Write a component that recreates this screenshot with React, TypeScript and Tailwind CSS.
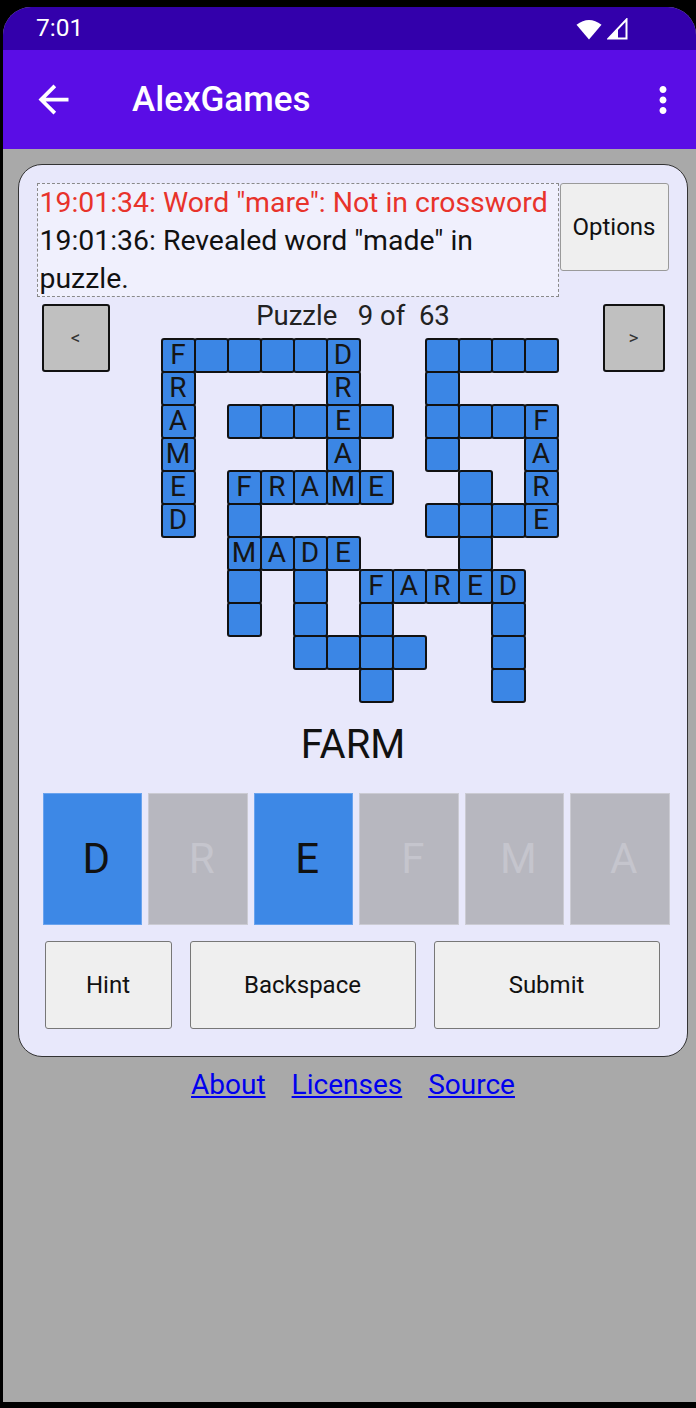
import React from 'react';

const GRID: string[] = [
  'F####D..####',
  'R....R..#...',
  'A.###E#.###F',
  'M....A..#..A',
  'E.FRAME..#.R',
  'D.#.....###E',
  '..MADE...#..',
  '..#.#.FARED.',
  '..#.#.#...#.',
  '....####..#.',
  '......#...#.',
];

const TILES = [
  { ch: 'D', used: true },
  { ch: 'R', used: false },
  { ch: 'E', used: true },
  { ch: 'F', used: false },
  { ch: 'M', used: false },
  { ch: 'A', used: false },
];

const StatusBar = () => (
  <div className="h-[43px] bg-[#3300ab] flex items-center pl-[33px] pr-[68px] text-white">
    <span className="text-[24.5px] leading-none">7:01</span>
    <div className="ml-auto flex items-center gap-[5px]">
      <svg width="26" height="22" viewBox="0 0 26 22">
        <path d="M0.5 6.8 Q13 -2.8 25.5 6.8 L13 21.5 Z" fill="white" />
      </svg>
      <svg width="21" height="22" viewBox="0 0 21 22">
        <path d="M19.5 1.5 L19.5 20.5 L1.5 20.5 Z" fill="none" stroke="white" strokeWidth="2" strokeLinejoin="miter" />
        <path d="M1.5 20.5 L11 11 L11 20.5 Z" fill="white" />
      </svg>
    </div>
  </div>
);

const AppBar = () => (
  <div className="h-[99px] bg-[#5a0de6] flex items-center text-white">
    <svg className="ml-[28px]" width="45" height="45" viewBox="0 0 24 24" fill="white">
      <path d="M20 11H7.83l5.59-5.59L12 4l-8 8 8 8 1.41-1.41L7.83 13H20v-2z" />
    </svg>
    <span className="ml-[56px] text-[35px] font-medium leading-none">AlexGames</span>
    <svg className="ml-auto mr-[12px]" width="42" height="42" viewBox="0 0 24 24" fill="white">
      <path d="M12 8c1.1 0 2-.9 2-2s-.9-2-2-2-2 .9-2 2 .9 2 2 2zm0 2c-1.1 0-2 .9-2 2s.9 2 2 2 2-.9 2-2-.9-2-2-2zm0 6c-1.1 0-2 .9-2 2s.9 2 2 2 2-.9 2-2-.9-2-2-2z" />
    </svg>
  </div>
);

const Crossword = () => (
  <div className="grid grid-cols-[repeat(12,33px)] grid-rows-[repeat(11,33px)]">
    {GRID.map((row, r) =>
      row.split('').map((c, i) => {
        if (c === '.') return <div key={`${r}-${i}`} />;
        return (
          <div
            key={`${r}-${i}`}
            className="bg-[#3b86e5] border-[1.5px] border-[#111] rounded-[2px] shadow-[0_0_0_1px_#111] flex items-center justify-center text-[28px] leading-none text-[#151515]"
          >
            {c === '#' ? '' : c}
          </div>
        );
      })
    )}
  </div>
);

export default function App() {
  return (
    <div className="w-[696px] h-[1408px] bg-black pt-[7px] pl-[3px] pb-[6px] overflow-hidden font-['Roboto',sans-serif]">
      <div className="h-full rounded-t-[28px] overflow-hidden bg-[#a9a9a9] flex flex-col">
        <StatusBar />
        <AppBar />

        <div className="ml-[15px] mt-[15px] w-[670px] bg-[#e8e8fb] border-[1.5px] border-[#333] rounded-[24px] p-[17.5px] pb-[27px]">
          {/* log + options */}
          <div className="flex items-start">
            <div className="w-[522px] h-[114px] border border-dashed border-[#8a8a8a] bg-[#f0f0fd] px-[2px] text-[28.4px] leading-[38px] text-[#111]">
              <div className="text-[#e8332b] whitespace-nowrap">19:01:34: Word "mare": Not in crossword</div>
              <div>19:01:36: Revealed word "made" in puzzle.</div>
            </div>
            <button className="ml-[1px] w-[109px] h-[88px] bg-[#efefef] border border-[#9a9a9a] rounded-[3px] text-[24px] text-[#111]">
              Options
            </button>
          </div>

          {/* nav + grid */}
          <div className="mt-[7px] flex items-start">
            <button className="ml-[5px] w-[68px] h-[68px] bg-[#c0c0c0] border-[2.5px] border-[#111] rounded-[3px] text-[19px] text-[#333] leading-none">
              &lt;
            </button>
            <div className="flex-1 flex flex-col">
              <div className="h-[35px] pr-[6px] text-center text-[27.5px] leading-[24px] text-[#222] whitespace-pre">
                Puzzle   9 of  63
              </div>
              <div className="ml-[52px]">
                <Crossword />
              </div>
            </div>
            <button className="mr-[5px] w-[62px] h-[68px] bg-[#c0c0c0] border-[2.5px] border-[#111] rounded-[3px] text-[19px] text-[#333] leading-none">
              &gt;
            </button>
          </div>

          <div className="mt-[21px] text-center text-[40px] leading-[44px] text-[#111]">FARM</div>

          {/* letter tiles */}
          <div className="mt-[26px] ml-[6px] grid grid-cols-6 gap-[6px] h-[132px]">
            {TILES.map((t, i) => (
              <div
                key={i}
                className={
                  t.used
                    ? 'bg-[#3d88e6] border border-[#6aa3ee] flex items-center justify-center pl-[8px] text-[42px] text-[#111]'
                    : 'bg-[#b7b7bf] border border-[#cbcbd3] flex items-center justify-center pl-[8px] text-[42px] text-[#c5c5cd]'
                }
              >
                {t.ch}
              </div>
            ))}
          </div>

          {/* action buttons */}
          <div className="mt-[16px] ml-[8px] flex gap-[18px] text-[24px] text-[#111]">
            <button className="w-[127px] h-[88px] bg-[#efefef] border border-[#777] rounded-[3px]">Hint</button>
            <button className="w-[226px] h-[88px] bg-[#efefef] border border-[#777] rounded-[3px]">Backspace</button>
            <button className="w-[226px] h-[88px] bg-[#efefef] border border-[#777] rounded-[3px]">Submit</button>
          </div>
        </div>

        <div className="ml-[15px] mt-[12px] w-[670px] flex justify-center gap-[26px] text-[28px] leading-[32px] text-[#0000ee]">
          <a href="#" className="underline">About</a>
          <a href="#" className="underline">Licenses</a>
          <a href="#" className="underline">Source</a>
        </div>
      </div>
    </div>
  );
}
